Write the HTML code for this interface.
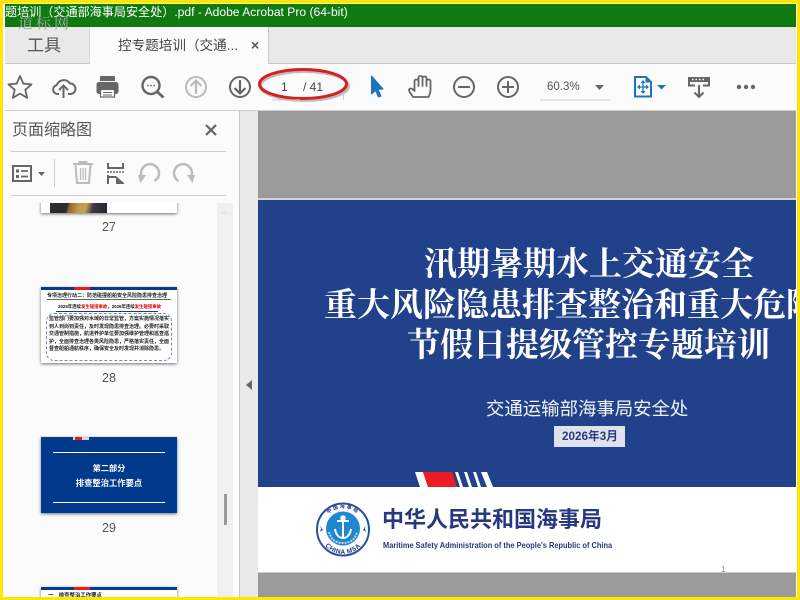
<!DOCTYPE html>
<html><head><meta charset="utf-8">
<style>
html,body{margin:0;padding:0;background:#fff}
#r{position:relative;width:800px;height:600px;overflow:hidden;background:#fff;font-family:"Liberation Sans","Noto Sans CJK SC",sans-serif}
#r div{position:absolute}
.t{white-space:nowrap;line-height:1}
svg{position:absolute;left:0;top:0}
.serif{font-family:"Noto Serif CJK SC",serif;color:#fff;font-size:33px;font-weight:700;white-space:nowrap;line-height:1}
.th{background:#fff;box-shadow:0 1px 3px rgba(0,0,0,.55)}
.n{font-size:12.500px;color:#555;width:136px;text-align:center;left:41px;line-height:1}
.b{filter:blur(.35px)}
</style></head><body>
<div id="r">
<div style="left:4.500px;top:4px;width:791.500px;height:23px;background:#107a10"></div>
<div style="left:4.500px;top:27px;width:791.500px;height:36px;background:#e9e9e9"></div>
<div class="t" style="left:5px;top:5px;font-size:12.100px;color:#fff;line-height:15px">题培训（交通部海事局安全处）.pdf - Adobe Acrobat Pro (64-bit)</div>
<div class="t" style="left:18px;top:15px;font-size:15px;color:#a3aba3;letter-spacing:3px;font-family:'Noto Serif CJK SC',serif">道标网</div>
<div style="left:4.500px;top:63px;width:791.500px;height:1px;background:#c8c8c8"></div>
<div style="left:89px;top:27px;width:179.500px;height:37px;background:#fbfbfb;border-right:1px solid #c8c8c8;border-left:1px solid #d8d8d8;box-sizing:border-box"></div>
<div class="t" style="left:27px;top:37px;font-size:17px;color:#555">工具</div>
<div class="t" style="left:118px;top:39px;font-size:13.600px;color:#444">控专题培训（交通...</div>
<div class="t" style="left:251px;top:38px;font-size:14px;font-weight:bold;color:#555">×</div>
<div style="left:4.500px;top:64px;width:791.500px;height:46px;background:#fbfbfb"></div>
<div style="left:4.500px;top:110px;width:791.500px;height:1px;background:#cfcfcf"></div>
<div style="left:4.500px;top:111px;width:234.500px;height:486px;background:#fbfbfb"></div>
<div style="left:239px;top:111px;width:1px;height:486px;background:#c8c8c8"></div>
<div style="left:240px;top:111px;width:18px;height:486px;background:#e9e9e9"></div>
<div style="left:217px;top:203px;width:16px;height:394px;background:#f0f0f0"></div>
<div style="left:224px;top:494px;width:3px;height:31px;background:#999"></div>
<div style="left:258px;top:111px;width:538px;height:87px;background:#9b9b9b"></div>
<div style="left:258px;top:198px;width:538px;height:2px;background:#d4d4d4"></div>
<div style="left:258px;top:200px;width:538px;height:287px;background:#21418a;overflow:hidden">
  <div class="serif" style="left:166px;top:45px">汛期暑期水上交通安全</div>
  <div class="serif" style="left:66px;top:86px">重大风险隐患排查整治和重大危险</div>
  <div class="serif" style="left:149px;top:126px">节假日提级管控专题培训</div>
  <div class="t" style="left:228px;top:200px;font-size:18.400px;color:#f2f3f8">交通运输部海事局安全处</div>
  <div style="left:296px;top:226px;width:71px;height:21px;background:#dfe1ee"></div>
  <div class="t" style="left:304px;top:231px;font-size:11.700px;font-weight:bold;color:#2b3a78">2026年3月</div>
</div>
<div style="left:258px;top:487px;width:538px;height:85px;background:#fff"></div>
<div style="left:258px;top:572px;width:538px;height:1px;background:#ccc"></div>
<div style="left:258px;top:573px;width:538px;height:24px;background:#9b9b9b"></div>
<div class="t" style="left:721px;top:566px;font-size:8px;color:#888">1</div>
<div class="t" style="left:382px;top:509px;font-size:22px;font-weight:bold;color:#27387f">中华人民共和国海事局</div>
<div class="t" style="left:383px;top:541px;font-size:8.400px;font-weight:bold;color:#27387f;transform:scaleX(.888);transform-origin:0 0">Maritime Safety Administration of the People's Republic of China</div>
<div class="t" style="left:12px;top:123px;font-size:16px;color:#555">页面缩略图</div>
<div style="left:11px;top:151px;width:215px;height:1px;background:#ccc"></div>
<div style="left:11px;top:195px;width:215px;height:1px;background:#ccc"></div>
<div style="left:54px;top:159px;width:1px;height:28px;background:#ccc"></div>

<div class="th" style="left:41px;top:190px;width:136px;height:23px;clip-path:inset(13px -5px -5px -5px)"></div>
<div style="left:50px;top:203px;width:57px;height:10px;background:linear-gradient(105deg,#2c2c30 0 30%,#8a6430 34%,#c49a48 50%,#caa050 62%,#3a3a44 74%,#25252a 100%)"></div>
<div class="n" style="top:221px">27</div>

<div class="th" style="left:41px;top:287px;width:136px;height:76px;overflow:hidden">
  <div class="b" style="left:0;top:0;width:136px;height:3px;background:#0a3a8a"></div>
  <div style="left:33px;top:0;width:16px;height:3px;background:#e02020"></div>
  <div class="t b" style="left:6px;top:6.500px;font-size:5px;font-weight:bold;color:#222">专项治理行动二：防范碰撞船舶安全风险隐患排查治理</div>
  <div style="left:6px;top:12px;width:124px;height:1px;background:#666"></div>
  <div class="t b" style="left:17px;top:18px;font-size:4.400px;font-weight:bold;color:#111">2025年连续<span style="color:#e00000">发生碰撞事故</span>，2026年连续<span style="color:#e00000">发生碰撞事故</span></div>
  <div style="left:15px;top:24px;width:102px;height:1px;background:#1a3a8a"></div>
  <div style="left:5px;top:26px;width:124px;height:46px;border:1px dashed #7a86c0;border-radius:8px"></div>
  <div class="t b" style="left:8px;top:29px;font-size:5px;font-weight:bold;color:#222;line-height:7.600px;width:120px;white-space:normal">监管部门要加强对水域的日常监管，方案实施情况落实到人到岗到责任，及时发现隐患排查治理。必要时采取交通管制措施，航道养护单位要加强维护管理和巡查巡护，全面排查治理各类风险隐患，严格落实责任，全面督查船舶通航秩序，确保安全及时发现并消除隐患。</div>
</div>
<div class="n" style="top:372px">28</div>

<div class="th" style="left:41px;top:437px;width:136px;height:76px;background:#013a8c;overflow:hidden">
  <div style="left:12px;top:15px;width:112px;height:1px;background:#fff"></div>
  <div style="left:12px;top:65px;width:112px;height:1px;background:#fff"></div>
  <div style="left:32px;top:0;width:16px;height:3px;background:#cfd6e8"></div>
  <div style="left:34px;top:0;width:7px;height:3px;background:#e02020"></div>
  <div class="t" style="left:0;top:28px;width:136px;text-align:center;font-size:8.200px;font-weight:bold;color:#fff">第二部分</div>
  <div class="t" style="left:0;top:42px;width:136px;text-align:center;font-size:8.300px;font-weight:bold;color:#fff">排查整治工作要点</div>
</div>
<div class="n" style="top:522px">29</div>

<div class="th" style="left:41px;top:587px;width:136px;height:30px;overflow:hidden">
  <div style="left:0;top:0;width:136px;height:3px;background:#0a3a8a"></div>
  <div style="left:33px;top:0;width:16px;height:3px;background:#e02020"></div>
  <div class="t" style="left:7px;top:7px;font-size:5.400px;font-weight:bold;color:#222">一　排查整治工作要点</div>
</div>

<div class="t" style="left:281px;top:81px;font-size:12px;color:#444">1</div>
<div class="t" style="left:303px;top:81px;font-size:12px;color:#444">/ 41</div>
<div class="t" style="left:547px;top:82px;font-size:11.500px;color:#555">60.3%</div>

<svg width="800" height="600" viewBox="0 0 800 600" fill="none">
 <defs>
  <path id="a1" d="M322 529a21 21 0 0 1 42 0"/>
  <path id="a2" d="M319 530a24 24 0 0 0 48 0"/>
 </defs>
 <!-- stripes -->
 <path d="M415 472h8l5 15h-8z" fill="#fff"/>
 <path d="M423 472h29l5 15h-29z" fill="#ed1c24"/>
 <path d="M455 472h3l5 15h-3zM464 472h3l5 15h-3zM473 472h3l5 15h-3zM481 472h6l6 15h-6z" fill="#fff"/>
 <!-- yellow border -->
 <path d="M0 0h800v3.500H0zM0 597h800v3H0zM0 0h3v600H0zM797 0h3v600h-3z" fill="#fde600"/>
 <!-- star -->
 <path d="M20 76l3.300 7.600 8.200.8-6.200 5.400 1.900 8-7.200-4.200-7.200 4.200 1.900-8-6.200-5.400 8.200-.8z" stroke="#666" stroke-width="1.800" stroke-linejoin="round"/>
 <!-- cloud -->
 <path d="M59 94h-1.500a4.500 4.500 0 0 1-.8-8.900A7.500 7.500 0 0 1 70 83.500a5 5 0 0 1 .5 10.500H68" stroke="#666" stroke-width="2"/>
 <path d="M63.500 98V85.500M59 90l4.500-4.500L68 90" stroke="#666" stroke-width="2"/>
 <!-- printer -->
 <path d="M100 81v-4a1 1 0 0 1 1-1h13a1 1 0 0 1 1 1v4z" fill="#666"/>
 <path d="M99 82h17a2.500 2.500 0 0 1 2.500 2.500v7a2.500 2.500 0 0 1-2.500 2.500h-1v-5h-15v5h-1a2.500 2.500 0 0 1-2.500-2.500v-7A2.500 2.500 0 0 1 99 82z" fill="#666"/>
 <rect x="100.500" y="89.500" width="14" height="7.500" fill="#fff" stroke="#666" stroke-width="1.200"/>
 <path d="M103 92.500h9M103 95h9" stroke="#666"/>
 <!-- search -->
 <circle cx="151" cy="85.500" r="8.500" stroke="#666" stroke-width="2.400"/>
 <path d="M157 91.500l6.500 6" stroke="#666" stroke-width="2.800"/>
 <path d="M147 85.500h1.500M150.300 85.500h1.500M153.500 85.500h1.500" stroke="#666" stroke-width="1.600"/>
 <!-- up -->
 <circle cx="196" cy="87" r="10" stroke="#bbb" stroke-width="2"/>
 <path d="M196 94V81M190.500 86l5.500-5.500 5.500 5.500" stroke="#bbb" stroke-width="2.200"/>
 <!-- down -->
 <circle cx="240" cy="87" r="10" stroke="#666" stroke-width="2"/>
 <path d="M240 80v13M234.500 88l5.500 5.500 5.500-5.500" stroke="#666" stroke-width="2.200"/>
 <!-- red ellipse -->
 <ellipse cx="304.500" cy="86" rx="44" ry="14.500" stroke="#000" stroke-opacity=".25" stroke-width="3"/>
 <ellipse cx="303" cy="84" rx="43.500" ry="14.500" stroke="#d81e1e" stroke-width="3"/>
 <path d="M272 100h28" stroke="#ccc"/><path d="M343.500 93v7" stroke="#ccc"/>
 <!-- pointer -->
 <path d="M371.500 76v18l4-3.500 3 6.500 2.500-1-3-6.500 5-.5z" fill="#1b75bc" stroke="#1b75bc" stroke-linejoin="round"/>
 <!-- hand -->
 <path d="M413 97c-1-2-4-5-4-7 0-1.500 2.500-2 4-.5l1.500 1.500V81c0-2 4-2 4 0v5-8.500c0-2 4-2 4 0V86v-8c0-2 4-2 4 0v8-5c0-2 4-2 4 0v9c0 3-1 5-2 7z" stroke="#666" stroke-width="1.800" stroke-linejoin="round"/>
 <!-- minus/plus -->
 <circle cx="464" cy="87" r="10" stroke="#666" stroke-width="2"/><path d="M458 87h12" stroke="#666" stroke-width="2"/>
 <circle cx="508" cy="87" r="10" stroke="#666" stroke-width="2"/><path d="M502 87h12M508 81v12" stroke="#666" stroke-width="2"/>
 <path d="M595 85h9l-4.500 5z" fill="#666"/>
 <path d="M540 100h71" stroke="#ccc"/>
 <!-- page fit -->
 <path d="M635 77h11l5 5v14.500h-16z" stroke="#1b75bc" stroke-width="2" fill="#fff"/>
 <path d="M646 77v5h5" stroke="#1b75bc" fill="#1b75bc"/>
 <path d="M638 87h10M643 81.500v11" stroke="#1b75bc" stroke-width="1.300"/>
 <path d="M643 80l-2.500 3h5zM643 94l-2.500-3h5zM637 87l3-2.500v5zM649 87l-3-2.500v5z" fill="#1b75bc"/>
 <path d="M657 85h9l-4.500 4.500z" fill="#1b75bc"/>
 <!-- keyboard/arrow -->
 <rect x="688" y="77" width="22" height="5" fill="#666"/>
 <path d="M692 79.500h1.500M695.500 79.500h1.500M699 79.500h1.500M702.500 79.500h1.500" stroke="#fff" stroke-width="1.500"/>
 <path d="M689 81v4.500h6M709 81v4.500h-6" stroke="#666" stroke-width="2"/>
 <path d="M699 85v12M694.500 92.500L699 97l4.500-4.500" stroke="#666" stroke-width="2"/>
 <circle cx="739" cy="87" r="2.200" fill="#666"/><circle cx="746" cy="87" r="2.200" fill="#666"/><circle cx="753" cy="87" r="2.200" fill="#666"/>
 <!-- sidebar icons -->
 <path d="M206 125l10 10M216 125l-10 10" stroke="#666" stroke-width="2.200"/>
 <rect x="13" y="166" width="18" height="15" stroke="#666" stroke-width="2"/>
 <rect x="16" y="169.500" width="3" height="3" fill="#666"/><rect x="16" y="175" width="3" height="3" fill="#666"/>
 <path d="M21 171h7M21 176.500h7" stroke="#666" stroke-width="1.800"/>
 <path d="M38 172h7l-3.500 4z" fill="#666"/>
 <path d="M73 164h20M79.500 164v-2h7v2M75.500 165l1.500 18h12l1.500-18" stroke="#bbb" stroke-width="2"/>
 <path d="M80.500 168v12M83 168v12M85.500 168v12" stroke="#bbb" stroke-width="1.200"/>
 <path d="M108 163v5h15v-5" stroke="#666" stroke-width="2"/>
 <path d="M107 172h17" stroke="#666" stroke-width="1.500" stroke-dasharray="2 1"/>
 <path d="M108 175v9M108 177h8" stroke="#666" stroke-width="2"/>
 <path d="M116 176l8 7v1h-8z" fill="#666"/>
 <path d="M154.500 181A9 9 0 1 0 141.200 175" stroke="#bbb" stroke-width="2.500"/><path d="M138 175h8l-5.500 8z" fill="#bbb"/>
 <path d="M178.500 181A9 9 0 1 1 191.800 175" stroke="#bbb" stroke-width="2.500"/><path d="M195 175h-8l5.500 8z" fill="#bbb"/>
 <path d="M225 210l4 4h-8z" fill="#e4e4e4"/>
 <path d="M246 385l6-5v10z" fill="#666"/>
 <!-- logo -->
 <circle cx="343" cy="529.500" r="26" fill="#fff" stroke="#27509f" stroke-width="2"/>
 <circle cx="343" cy="528.500" r="17" fill="#1f87cf"/>
 <path d="M343 516v22M337 521h12M335 529c1 7 5 9 8 9s7-2 8-9" stroke="#fff" stroke-width="2"/>
 <circle cx="343" cy="518" r="2" stroke="#fff" stroke-width="1.500"/>
 <path d="M329 532c2 8 7 11 14 11s12-3 14-11" stroke="#bcd8ee" stroke-width="2" stroke-dasharray="2 1"/>
 <path d="M323 530l-3 1.800 1.200-3.200-1.200-3.200zM363 530l3 1.800-1.200-3.200 1.200-3.200z" fill="#27509f"/>
 <text font-family="Liberation Sans" font-weight="bold" font-size="6.500" fill="#27387f" letter-spacing=".4"><textPath href="#a2" startOffset="50%" text-anchor="middle">CHINA MSA</textPath></text>
 <text font-family="Noto Sans CJK SC" font-weight="bold" font-size="5" fill="#27387f" letter-spacing="1.500"><textPath href="#a1" startOffset="50%" text-anchor="middle">中国海事局</textPath></text>
</svg>
</div>
</body></html>
